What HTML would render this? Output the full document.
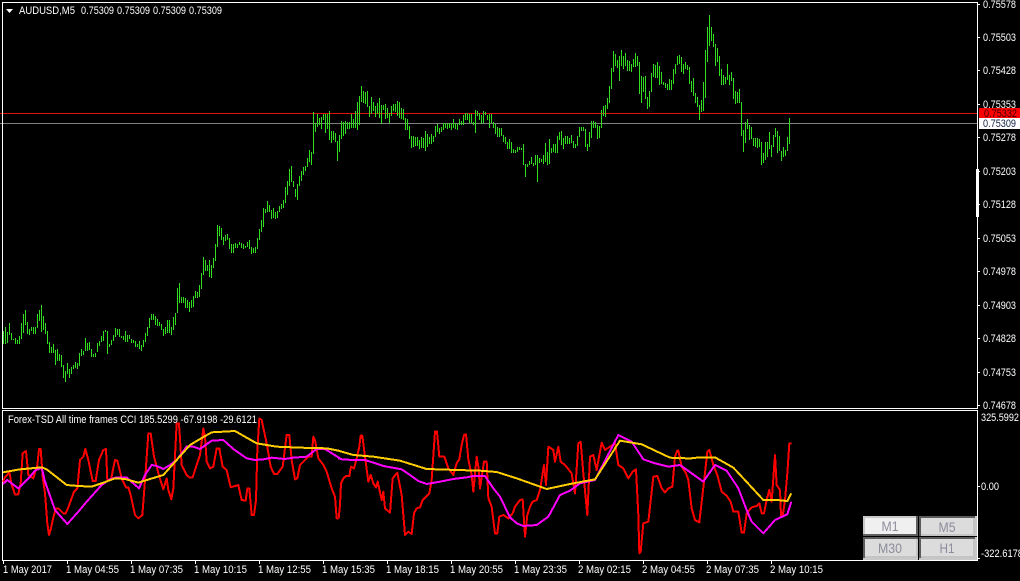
<!DOCTYPE html>
<html><head><meta charset="utf-8"><title>AUDUSD,M5</title>
<style>
html,body{margin:0;padding:0;background:#000;width:1020px;height:581px;overflow:hidden}
svg{display:block;position:absolute;left:0;top:0}
text{font-family:"Liberation Sans",sans-serif;font-size:11px;fill:#fff}
.b{font-size:13.5px;fill:#8c8c9c;text-anchor:middle}
</style></head><body>
<svg width="1020" height="581" viewBox="0 0 1020 581" xmlns="http://www.w3.org/2000/svg">
<rect width="1020" height="581" fill="#000"/>
<g shape-rendering="crispEdges">
<rect x="0" y="113" width="977" height="1" fill="#e01010"/>
<rect x="0" y="123" width="977" height="1" fill="#808080"/>
<g transform="translate(.5 0)" stroke="#32dc20" stroke-width="1" fill="none"><path d="M3 331V344M5 327V344M7 332V343M9 323V335M11 333V340M13 339V340M15 338V344M17 340V344M19 336V344M21 323V339M23 314V333M25 310V325M27 322V334M29 329V335M31 327V331M33 327V334M35 327V334M37 314V328M39 310V321M41 305V332M43 316V330M45 323V334M47 331V344M49 342V353M51 347V353M53 344V353M55 350V365M57 349V361M59 354V361M61 355V367M63 365V378M65 371V382M67 363V374M69 369V378M71 367V374M73 365V369M75 362V368M77 363V369M79 353V366M81 349V356M83 351V355M85 338V351M87 343V351M89 342V350M91 349V357M93 354V357M95 353V357M97 343V352M99 341V346M101 336V342M103 331V341M105 330V332M107 331V354M109 344V347M111 340V345M113 335V341M115 328V337M117 329V335M119 329V337M121 336V338M123 336V340M125 331V342M127 335V342M129 335V339M131 339V343M133 340V343M135 341V347M137 344V347M139 341V349M141 345V351M143 340V347M145 333V342M147 327V336M149 318V328M151 314V320M153 314V320M155 316V325M157 319V326M159 322V326M161 324V330M163 329V336M165 327V334M167 320V333M169 320V333M171 327V335M173 317V330M175 313V325M177 288V313M179 283V303M181 297V303M183 297V303M185 298V308M187 300V308M189 302V312M191 300V308M193 296V307M195 291V298M197 292V298M199 285V297M201 273V289M203 257V275M205 260V271M207 265V271M209 260V277M211 265V278M213 258V268M215 244V261M217 225V247M219 226V236M221 228V240M223 237V245M225 235V241M227 234V240M229 238V249M231 244V253M233 244V253M235 243V248M237 244V248M239 242V245M241 243V248M243 244V249M245 246V248M247 242V247M249 240V249M251 247V254M253 248V253M255 247V253M257 238V249M259 229V240M261 220V232M263 208V227M265 209V213M267 201V212M269 205V212M271 210V219M273 208V218M275 212V219M277 211V218M279 206V212M281 204V209M283 200V208M285 187V203M287 181V195M289 169V186M291 166V182M293 181V187M295 189V197M297 184V200M299 176V186M301 171V181M303 167V175M305 166V171M307 158V167M309 150V162M311 152V165M313 112V154M315 123V132M317 114V127M319 118V125M321 117V129M323 114V120M325 114V133M327 114V129M329 111V140M331 131V143M333 131V140M335 133V142M337 141V161M339 135V152M341 121V139M343 122V136M345 121V134M347 122V129M349 122V129M351 114V128M353 119V128M355 111V128M357 102V130M359 96V125M361 86V102M363 91V103M365 92V104M367 91V107M369 106V117M371 97V114M373 102V111M375 106V117M377 103V114M379 98V118M381 105V124M383 105V110M385 104V119M387 108V118M389 113V123M391 106V116M393 104V111M395 104V112M397 101V116M399 102V118M401 108V119M403 109V120M405 118V130M407 119V130M409 126V139M411 136V148M413 136V147M415 137V146M417 137V146M419 140V149M421 137V148M423 138V148M425 131V151M427 134V147M429 137V144M431 134V144M433 136V142M435 126V137M437 124V132M439 128V134M441 127V132M443 123V130M445 123V128M447 123V129M449 123V128M451 123V130M453 119V128M455 123V129M457 124V130M459 119V125M461 121V125M463 115V125M465 113V120M467 113V120M469 114V123M471 114V123M473 122V125M475 110V133M477 111V116M479 113V120M481 115V124M483 111V123M485 112V115M487 115V120M489 114V128M491 114V123M493 122V128M495 124V134M497 127V137M499 128V137M501 128V136M503 135V142M505 137V144M507 142V149M509 139V149M511 142V153M513 149V153M515 150V153M517 147V152M519 147V150M521 148V150M523 144V165M525 164V177M527 164V167M529 161V165M531 157V164M533 163V166M535 155V165M537 155V182M539 158V163M541 159V162M543 155V164M545 143V162M547 152V165M549 139V164M551 148V153M553 144V152M555 144V153M557 136V153M559 132V140M561 131V145M563 138V149M565 136V144M567 136V144M569 138V144M571 135V143M573 141V148M575 144V148M577 136V146M579 127V137M581 127V131M583 127V131M585 129V147M587 144V151M589 132V147M591 121V138M593 121V128M595 122V128M597 125V139M599 126V138M601 110V128M603 106V116M605 105V117M607 98V109M609 86V103M611 68V89M613 51V72M615 54V66M617 60V68M619 56V81M621 50V66M623 56V69M625 53V66M627 60V71M629 61V71M631 64V72M633 59V67M635 53V67M637 56V66M639 62V94M641 76V103M643 77V92M645 76V99M647 97V109M649 91V107M651 73V92M653 64V77M655 65V78M657 62V78M659 66V85M661 72V84M663 82V85M665 83V88M667 84V90M669 79V90M671 80V90M673 69V84M675 64V74M677 56V65M679 55V64M681 57V72M683 64V74M685 62V69M687 65V70M689 67V84M691 81V92M693 78V96M695 93V103M697 97V107M699 105V120M701 100V112M703 82V111M705 50V98M707 27V62M709 15V46M711 27V41M713 34V47M715 44V66M717 48V62M719 56V76M721 69V85M723 75V85M725 77V84M727 64V80M729 75V85M731 72V81M733 78V99M735 91V104M737 92V103M739 89V103M741 102V136M743 130V152M745 122V143M747 119V129M749 125V140M751 127V139M753 138V146M755 138V147M757 138V148M759 139V147M761 142V165M763 153V163M765 142V160M767 142V157M769 132V149M771 145V157M773 135V147M775 128V137M777 131V153M779 136V151M781 151V161M783 147V157M785 150V156M787 137V151M789 118V144"/></g>
<!-- frames -->
<rect x="2" y="2" width="976" height="1" fill="#fff"/>
<rect x="2" y="2" width="1" height="407" fill="#fff"/>
<rect x="977" y="2" width="1" height="407" fill="#fff"/>
<rect x="2" y="408" width="976" height="1" fill="#fff"/>
<rect x="2" y="410" width="976" height="1" fill="#fff"/>
<rect x="2" y="410" width="1" height="151" fill="#fff"/>
<rect x="977" y="410" width="1" height="151" fill="#fff"/>
<rect x="2" y="560" width="976" height="1" fill="#fff"/>
<rect x="976" y="169" width="3" height="48" fill="#fff"/>
<!-- ticks -->
<g fill="#fff"><rect x="978" y="4" width="2" height="1"/><rect x="978" y="37" width="2" height="1"/><rect x="978" y="70" width="2" height="1"/><rect x="978" y="104" width="2" height="1"/><rect x="978" y="137" width="2" height="1"/><rect x="978" y="171" width="2" height="1"/><rect x="978" y="204" width="2" height="1"/><rect x="978" y="238" width="2" height="1"/><rect x="978" y="271" width="2" height="1"/><rect x="978" y="305" width="2" height="1"/><rect x="978" y="338" width="2" height="1"/><rect x="978" y="372" width="2" height="1"/><rect x="978" y="405" width="2" height="1"/><rect x="978" y="486" width="2" height="1"/><rect x="978" y="558" width="2" height="1"/>
<rect x="3" y="561" width="1" height="3"/><rect x="67" y="561" width="1" height="3"/><rect x="131" y="561" width="1" height="3"/><rect x="195" y="561" width="1" height="3"/><rect x="259" y="561" width="1" height="3"/><rect x="323" y="561" width="1" height="3"/><rect x="387" y="561" width="1" height="3"/><rect x="451" y="561" width="1" height="3"/><rect x="515" y="561" width="1" height="3"/><rect x="579" y="561" width="1" height="3"/><rect x="643" y="561" width="1" height="3"/><rect x="707" y="561" width="1" height="3"/><rect x="771" y="561" width="1" height="3"/></g>
<rect x="979" y="108" width="41" height="10" fill="#ff0000"/>
<rect x="979" y="118" width="41" height="11" fill="#fff"/>
</g>
<!-- indicators -->
<g fill="none" stroke-width="6" stroke-linejoin="round" shape-rendering="crispEdges">
<g transform="translate(0 400) scale(.33333)">
<polyline stroke="#ff0000" points="9,245 15,232 22,225 28,215 34,250 45,283 55,283 62,250 68,160 78,153 85,225 100,235 112,195 117,147 122,147 128,230 135,280 142,370 147,405 153,385 160,352 168,325 175,325 190,340 197,340 205,322 222,275 232,265 240,180 250,170 256,147 265,180 278,243 287,243 297,180 310,150 318,147 322,240 333,238 345,180 352,182 365,235 378,262 385,262 392,285 405,345 415,355 427,345 437,215 445,100 452,100 462,170 478,230 490,268 500,235 505,270 514,298 520,265 530,70 537,70 545,195 560,225 568,232 578,232 590,195 600,165 610,85 615,110 620,185 630,205 640,200 650,145 658,145 668,200 680,210 692,262 715,255 725,300 737,302 742,265 748,265 755,345 762,345 768,300 772,150 778,55 785,60 800,130 812,200 822,222 832,222 848,200 860,105 868,105 875,180 885,238 892,235 900,195 915,180 925,170 935,170 940,110 945,120 955,175 970,195 980,215 995,265 1005,290 1010,355 1016,355"/>
</g>
<g transform="translate(340 400) scale(.33333)">
<polyline stroke="#ff0000" points="-4,355 0,315 3,250 10,235 18,228 28,228 33,200 42,205 50,175 58,140 62,107 67,107 75,170 85,245 92,225 100,250 108,262 113,245 125,300 130,275 135,325 150,338 158,235 172,218 185,285 195,405 205,395 215,402 222,340 230,325 240,322 248,300 268,280 275,240 285,95 291,95 298,170 313,170 325,205 340,225 350,190 358,178 365,135 372,105 378,103 385,178 395,225 400,275 410,170 415,200 420,265 432,185 440,185 445,295 455,320 465,400 472,400 478,350 490,345 505,355 518,340 525,320 540,300 548,298 555,410 562,345 570,320 578,305 590,300 600,270 612,195 618,255 625,140 640,150 645,185 655,140 662,185 675,195 695,220 705,280 715,130 722,125 730,220 742,345 750,170 760,165 770,210 785,128 795,150 810,140 825,130 835,195 850,205 865,235 878,215 888,208 895,345 898,460 902,455 910,370 925,365 940,230 952,228 965,265 975,277 985,265 997,260 1005,170 1012,150"/>
</g>
<g transform="translate(600 400) scale(.33333)">
<polyline stroke="#ff0000" points="232,150 235,152 245,200 258,220 265,240 275,325 285,360 298,367 312,245 322,155 328,150 340,195 352,225 365,275 380,287 392,305 400,335 415,335 425,398 432,398 440,340 455,322 470,318 478,310 485,340 492,340 500,300 508,270 515,305 525,165 530,255 540,270 543,348 548,348 555,300 562,220 568,130 574,130"/>
<polyline stroke="#ff00ff" points="240,195 310,245 345,195 380,212 415,265 440,330 455,365 490,400 525,360 562,343 574,305"/>
<polyline stroke="#ffcc00" points="240,173 265,176 290,173 345,172 400,203 430,235 490,300 530,300 562,303 574,280"/>
</g>
<g transform="translate(0 400) scale(.33333)">
<polyline stroke="#ff00ff" points="9,252 22,240 35,250 55,265 70,250 90,230 105,212 125,203 135,245 165,330 202,372 235,335 260,305 305,255 330,238 350,232 380,232 400,250 417,265 435,225 455,195 470,198 490,207 510,195 530,180 560,140 580,140 600,147 635,122 670,120 700,147 740,175 765,180 790,178 815,173 855,177 880,173 920,170 950,147 975,147 1020,175"/>
<polyline stroke="#ffcc00" points="9,217 60,208 125,202 140,208 200,255 235,258 275,260 305,250 345,235 375,237 415,248 450,237 490,225 530,180 570,135 595,120 635,97 705,93 770,130 830,140 900,143 980,145 1020,153"/>
</g>
<g transform="translate(340 400) scale(.33333)">
<polyline stroke="#ff00ff" points="-5,175 10,179 75,180 100,188 130,198 185,208 210,225 235,243 260,252 300,245 340,237 380,232 400,228 435,228 460,265 480,290 510,352 530,370 550,378 590,375 625,350 660,285 690,272 720,250 765,240 835,105 875,125 910,178 945,190 985,200 1020,195"/>
<polyline stroke="#ffcc00" points="-5,152 40,165 100,170 180,182 260,207 350,210 420,212 470,216 530,235 620,267 690,252 765,238 840,122 905,133 990,173 1020,175"/>
</g>
</g>
<!-- header -->
<polygon points="6,9 13,9 9.5,13" fill="#fff"/>
<text x="19" y="14" textLength="56" lengthAdjust="spacingAndGlyphs">AUDUSD,M5</text>
<text x="81" y="14" textLength="33" lengthAdjust="spacingAndGlyphs">0.75309</text>
<text x="117" y="14" textLength="33" lengthAdjust="spacingAndGlyphs">0.75309</text>
<text x="153" y="14" textLength="33" lengthAdjust="spacingAndGlyphs">0.75309</text>
<text x="189" y="14" textLength="33" lengthAdjust="spacingAndGlyphs">0.75309</text>
<text x="8" y="423" textLength="249" lengthAdjust="spacingAndGlyphs">Forex-TSD All time frames CCI 185.5299 -67.9198 -29.6121</text>
<!-- price axis -->
<g>
<text x="983" y="8" textLength="33" lengthAdjust="spacingAndGlyphs">0.75578</text>
<text x="983" y="41" textLength="33" lengthAdjust="spacingAndGlyphs">0.75503</text>
<text x="983" y="74" textLength="33" lengthAdjust="spacingAndGlyphs">0.75428</text>
<text x="983" y="108" textLength="33" lengthAdjust="spacingAndGlyphs">0.75353</text>
<text x="984" y="117" textLength="33" lengthAdjust="spacingAndGlyphs" style="fill:#300">0.75332</text>
<text x="983" y="127" textLength="33" lengthAdjust="spacingAndGlyphs" style="fill:#102040">0.75309</text>
<text x="983" y="141" textLength="33" lengthAdjust="spacingAndGlyphs">0.75278</text>
<text x="983" y="175" textLength="33" lengthAdjust="spacingAndGlyphs">0.75203</text>
<text x="983" y="208" textLength="33" lengthAdjust="spacingAndGlyphs">0.75128</text>
<text x="983" y="242" textLength="33" lengthAdjust="spacingAndGlyphs">0.75053</text>
<text x="983" y="275" textLength="33" lengthAdjust="spacingAndGlyphs">0.74978</text>
<text x="983" y="309" textLength="33" lengthAdjust="spacingAndGlyphs">0.74903</text>
<text x="983" y="342" textLength="33" lengthAdjust="spacingAndGlyphs">0.74828</text>
<text x="983" y="376" textLength="33" lengthAdjust="spacingAndGlyphs">0.74753</text>
<text x="983" y="409" textLength="33" lengthAdjust="spacingAndGlyphs">0.74678</text>
<text x="981" y="421" textLength="38" lengthAdjust="spacingAndGlyphs">325.5992</text>
<text x="981" y="490" textLength="18" lengthAdjust="spacingAndGlyphs">0.00</text>
<text x="981" y="557" textLength="42" lengthAdjust="spacingAndGlyphs">-322.6178</text>
</g>
<!-- time axis -->
<g>
<text x="3" y="573" textLength="49" lengthAdjust="spacingAndGlyphs">1 May 2017</text>
<text x="66" y="573" textLength="53" lengthAdjust="spacingAndGlyphs">1 May 04:55</text>
<text x="130" y="573" textLength="53" lengthAdjust="spacingAndGlyphs">1 May 07:35</text>
<text x="194" y="573" textLength="53" lengthAdjust="spacingAndGlyphs">1 May 10:15</text>
<text x="258" y="573" textLength="53" lengthAdjust="spacingAndGlyphs">1 May 12:55</text>
<text x="322" y="573" textLength="53" lengthAdjust="spacingAndGlyphs">1 May 15:35</text>
<text x="386" y="573" textLength="53" lengthAdjust="spacingAndGlyphs">1 May 18:15</text>
<text x="450" y="573" textLength="53" lengthAdjust="spacingAndGlyphs">1 May 20:55</text>
<text x="514" y="573" textLength="53" lengthAdjust="spacingAndGlyphs">1 May 23:35</text>
<text x="578" y="573" textLength="53" lengthAdjust="spacingAndGlyphs">2 May 02:15</text>
<text x="642" y="573" textLength="53" lengthAdjust="spacingAndGlyphs">2 May 04:55</text>
<text x="706" y="573" textLength="53" lengthAdjust="spacingAndGlyphs">2 May 07:35</text>
<text x="770" y="573" textLength="53" lengthAdjust="spacingAndGlyphs">2 May 10:15</text>
</g>
<!-- buttons -->
<g shape-rendering="crispEdges">
<rect x="863" y="516" width="55" height="20" fill="#c8c8c8"/>
<rect x="865" y="518" width="51" height="16" fill="#f0f0f0"/>
<path d="M916 516h2v20h-55v-2h53z" fill="#606060"/>
<rect x="919" y="516" width="56" height="20" fill="#5c5c5c"/>
<rect x="921" y="518" width="54" height="18" fill="#c4c4c4"/>
<rect x="921" y="518" width="52" height="16" fill="#dcdcdc"/>
<rect x="863" y="537" width="55" height="21" fill="#5c5c5c"/>
<rect x="865" y="539" width="53" height="19" fill="#c4c4c4"/>
<rect x="865" y="539" width="51" height="17" fill="#dcdcdc"/>
<rect x="919" y="537" width="56" height="21" fill="#5c5c5c"/>
<rect x="921" y="539" width="54" height="19" fill="#c4c4c4"/>
<rect x="921" y="539" width="52" height="17" fill="#dcdcdc"/>
<rect x="975" y="516" width="2" height="20" fill="#c8c8c8"/>
<rect x="975" y="537" width="2" height="21" fill="#c8c8c8"/>
<rect x="863" y="558" width="55" height="2" fill="#c8c8c8"/>
<rect x="919" y="558" width="56" height="2" fill="#c8c8c8"/>
<rect x="975" y="558" width="2" height="2" fill="#c8c8c8"/>
</g>
<text class="b" x="890" y="531" textLength="17" lengthAdjust="spacingAndGlyphs">M1</text>
<text class="b" x="947" y="532" textLength="17" lengthAdjust="spacingAndGlyphs">M5</text>
<text class="b" x="890" y="553" textLength="24" lengthAdjust="spacingAndGlyphs">M30</text>
<text class="b" x="947" y="553" textLength="15" lengthAdjust="spacingAndGlyphs">H1</text>
</svg>
</body></html>
